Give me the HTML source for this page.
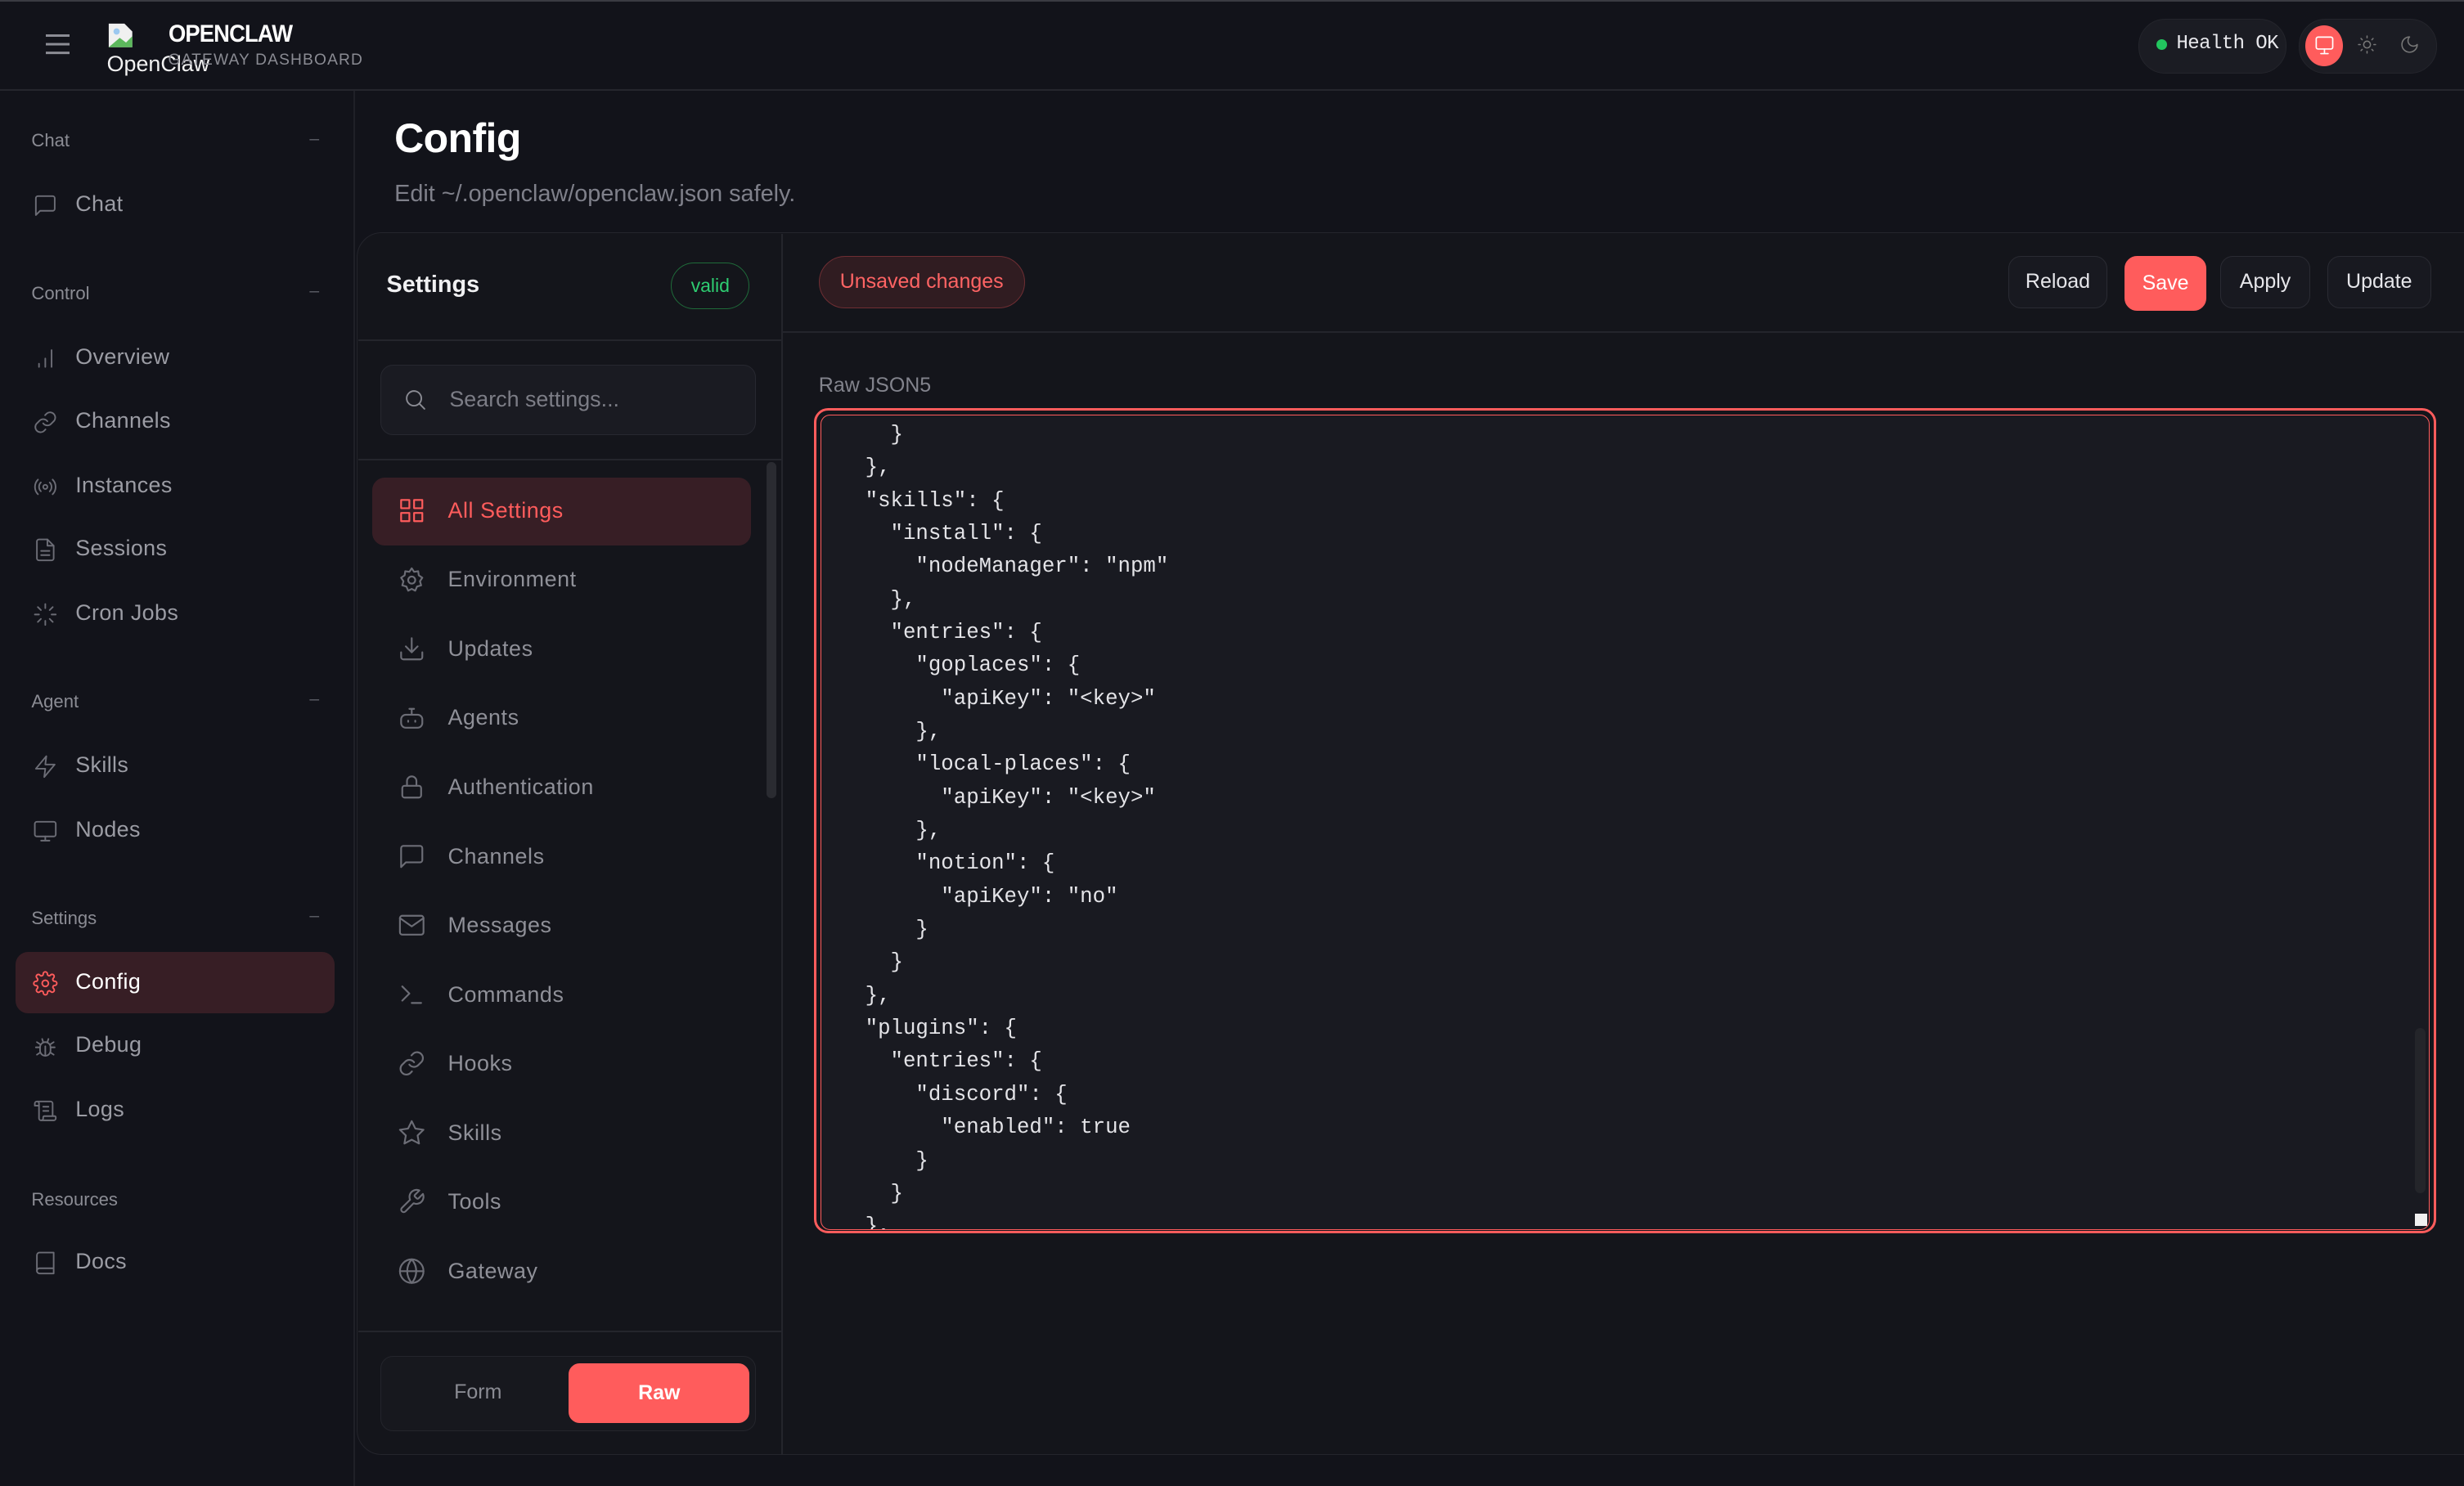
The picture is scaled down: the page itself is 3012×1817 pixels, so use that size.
<!DOCTYPE html>
<html><head><meta charset="utf-8">
<style>
html{zoom:1.92092}
body{margin:0;width:1568px;height:945.4px;background:#12131a;font-family:"Liberation Sans",sans-serif;color:#e6e6ea;overflow:hidden;position:relative}
.a{position:absolute}
.ic{position:absolute;fill:none;stroke:currentColor;stroke-width:1.5;stroke-linecap:round;stroke-linejoin:round}
.sl{position:absolute;left:20px;font-size:11.5px;color:#8b8c94}
.sd{position:absolute;left:197px;font-size:11px;color:#5c5d66}
.si{position:absolute;left:0;width:226px;height:20px;color:#9b9ca4;font-size:14px}
.si span{position:absolute;left:48px;top:1px;letter-spacing:.2px}
.si svg{left:21px;top:2px;width:16px;height:16px;color:#6c6d76}
.ni{position:absolute;left:237px;width:241px;height:44px;color:#8f9098;font-size:14px}
.ni span{position:absolute;left:48px;top:13px;letter-spacing:.3px}
.ni svg{left:16px;top:12px;width:18px;height:18px;color:#6c6d76}
.btn{position:absolute;top:163px;height:32px;border:1px solid #2a2b33;border-radius:8px;background:#181920;font-size:13px;color:#e6e6ea;text-align:center;line-height:32px}
pre{margin:0;font-family:"Liberation Mono","DejaVu Sans Mono",monospace;font-size:13.4px;line-height:21px;color:#e4e4e8}
</style></head><body>
<div class="a" style="left:0;top:0;width:1568px;height:1px;background:#3a3b42"></div>
<!-- top bar -->
<div class="a" style="left:0;top:57px;width:1568px;height:1px;background:#25262d"></div>
<div class="a" style="left:29px;top:22px;width:15px;height:1.5px;background:#8c8d95;box-shadow:0 5.5px 0 #8c8d95,0 11px 0 #8c8d95"></div>
<svg class="a" style="left:68px;top:14px" width="17" height="17" viewBox="0 0 17 17"><path d="M1 1h10l5 5v10H1z" fill="#f0f0f0"/><path d="M1 16l7-6 4 3 4-4v7z" fill="#5cb85c"/><circle cx="6" cy="6" r="2" fill="#9cc8f0"/></svg>
<div class="a" style="left:68px;top:33px;font-size:14px;color:#f2f2f2">OpenClaw</div>
<div class="a" style="left:107px;top:13px;font-size:15.5px;font-weight:bold;color:#fff;letter-spacing:-.5px;transform:scaleX(.92);transform-origin:left">OPENCLAW</div>
<div class="a" style="left:107px;top:33px;font-size:10px;color:#8a8b93;letter-spacing:.6px">GATEWAY DASHBOARD</div>
<div class="a" style="left:1361px;top:12px;width:93px;height:34px;border-radius:17px;background:#1b1c23;border:1px solid #24252c"></div>
<div class="a" style="left:1372px;top:25px;width:7px;height:7px;border-radius:50%;background:#22c55e"></div>
<div class="a" style="left:1385px;top:21px;font-size:12.5px;color:#e8e8ec;font-family:'Liberation Mono',monospace;letter-spacing:-.3px">Health OK</div>
<div class="a" style="left:1463px;top:12px;width:87px;height:34px;border-radius:17px;background:#1b1c23;border:1px solid #24252c"></div>
<div class="a" style="left:1467px;top:16px;width:24px;height:26px;border-radius:50%;background:#ff5c5c"></div>
<svg class="ic" style="left:1472px;top:22px;color:#fff" width="14" height="14" viewBox="0 0 24 24"><rect x="3" y="3" width="18" height="13" rx="2"/><path d="M12 16v4M8 21h8"/></svg>
<svg class="ic" style="left:1500px;top:22px;color:#777" width="13" height="13" viewBox="0 0 24 24"><circle cx="12" cy="12" r="4"/><path d="M12 2v2M12 20v2M4.9 4.9l1.4 1.4M17.7 17.7l1.4 1.4M2 12h2M20 12h2M4.9 19.1l1.4-1.4M17.7 6.3l1.4-1.4"/></svg>
<svg class="ic" style="left:1527px;top:22px;color:#777" width="13" height="13" viewBox="0 0 24 24"><path d="M12 3a6 6 0 0 0 9 9 9 9 0 1 1-9-9z"/></svg>

<!-- sidebar -->
<div class="a" style="left:225px;top:58px;width:1px;height:888px;background:#1f2027"></div>
<div class="sl" style="top:83px">Chat</div><div class="sd" style="top:82px">–</div>
<div class="si" style="top:121px"><svg class="ic" viewBox="0 0 24 24"><path d="M21 15a2 2 0 0 1-2 2H7l-4 4V5a2 2 0 0 1 2-2h14a2 2 0 0 1 2 2z"/></svg><span>Chat</span></div>
<div class="sl" style="top:180px">Control</div><div class="sd" style="top:179px">–</div>
<div class="si" style="top:218px"><svg class="ic" viewBox="0 0 24 24"><path d="M6 20v-3M12 20v-8M18 20V4"/></svg><span>Overview</span></div>
<div class="si" style="top:259px"><svg class="ic" viewBox="0 0 24 24"><path d="M10 13a5 5 0 0 0 7.5.5l3-3a5 5 0 0 0-7-7l-1.7 1.7"/><path d="M14 11a5 5 0 0 0-7.5-.5l-3 3a5 5 0 0 0 7 7l1.7-1.7"/></svg><span>Channels</span></div>
<div class="si" style="top:300px"><svg class="ic" viewBox="0 0 24 24"><circle cx="12" cy="12" r="2"/><path d="M16.2 7.8a6 6 0 0 1 0 8.5M7.8 16.2a6 6 0 0 1 0-8.5M19 5a10 10 0 0 1 0 14M5 19A10 10 0 0 1 5 5"/></svg><span>Instances</span></div>
<div class="si" style="top:340px"><svg class="ic" viewBox="0 0 24 24"><path d="M14 2H6a2 2 0 0 0-2 2v16a2 2 0 0 0 2 2h12a2 2 0 0 0 2-2V8z"/><path d="M14 2v6h6M8 13h8M8 17h8"/></svg><span>Sessions</span></div>
<div class="si" style="top:381px"><svg class="ic" viewBox="0 0 24 24"><path d="M12 2v4M12 18v4M4.9 4.9l2.9 2.9M16.2 16.2l2.9 2.9M2 12h4M18 12h4M4.9 19.1l2.9-2.9M16.2 7.8l2.9-2.9"/></svg><span>Cron Jobs</span></div>
<div class="sl" style="top:440px">Agent</div><div class="sd" style="top:439px">–</div>
<div class="si" style="top:478px"><svg class="ic" viewBox="0 0 24 24"><path d="M13 2L3 14h9l-1 8 10-12h-9z"/></svg><span>Skills</span></div>
<div class="si" style="top:519px"><svg class="ic" viewBox="0 0 24 24"><rect x="2" y="3" width="20" height="14" rx="2"/><path d="M8 21h8M12 17v4"/></svg><span>Nodes</span></div>
<div class="sl" style="top:578px">Settings</div><div class="sd" style="top:577px">–</div>
<div class="a" style="left:10px;top:606px;width:203px;height:39px;border-radius:8px;background:#371e25"></div>
<div class="si" style="top:616px;color:#fff"><svg class="ic" viewBox="0 0 24 24" style="color:#ff5c5c"><circle cx="12" cy="12" r="3"/><path d="M19.4 15a1.7 1.7 0 0 0 .3 1.8l.1.1a2 2 0 1 1-2.8 2.8l-.1-.1a1.7 1.7 0 0 0-1.8-.3 1.7 1.7 0 0 0-1 1.5V21a2 2 0 1 1-4 0v-.1a1.7 1.7 0 0 0-1.1-1.5 1.7 1.7 0 0 0-1.8.3l-.1.1a2 2 0 1 1-2.8-2.8l.1-.1a1.7 1.7 0 0 0 .3-1.8 1.7 1.7 0 0 0-1.5-1H3a2 2 0 1 1 0-4h.1a1.7 1.7 0 0 0 1.5-1.1 1.7 1.7 0 0 0-.3-1.8l-.1-.1a2 2 0 1 1 2.8-2.8l.1.1a1.7 1.7 0 0 0 1.8.3H9a1.7 1.7 0 0 0 1-1.5V3a2 2 0 1 1 4 0v.1a1.7 1.7 0 0 0 1 1.5 1.7 1.7 0 0 0 1.8-.3l.1-.1a2 2 0 1 1 2.8 2.8l-.1.1a1.7 1.7 0 0 0-.3 1.8V9a1.7 1.7 0 0 0 1.5 1H21a2 2 0 1 1 0 4h-.1a1.7 1.7 0 0 0-1.5 1z"/></svg><span>Config</span></div>
<div class="si" style="top:656px"><svg class="ic" viewBox="0 0 24 24"><rect x="7" y="8" width="10" height="13" rx="5"/><path d="M12 12v9M3 13h4M17 13h4M4 8l3 2M20 8l-3 2M4 20l3-2M20 20l-3-2M9 5l1 3M15 5l-1 3"/></svg><span>Debug</span></div>
<div class="si" style="top:697px"><svg class="ic" viewBox="0 0 24 24"><path d="M15 12h-5M15 8h-5M19 17V5a2 2 0 0 0-2-2H4M8 21h12a2 2 0 0 0 2-2v-1a1 1 0 0 0-1-1H11a1 1 0 0 0-1 1v1a2 2 0 1 1-4 0V5a2 2 0 1 0-4 0v2h4"/></svg><span>Logs</span></div>
<div class="sl" style="top:757px">Resources</div>
<div class="si" style="top:794px"><svg class="ic" viewBox="0 0 24 24"><path d="M4 19.5A2.5 2.5 0 0 1 6.5 17H20V2H6.5A2.5 2.5 0 0 0 4 4.5z"/><path d="M4 19.5A2.5 2.5 0 0 0 6.5 22H20v-5"/></svg><span>Docs</span></div>

<!-- header -->
<div class="a" style="left:251px;top:73px;font-size:26px;font-weight:bold;color:#fff;letter-spacing:-.3px">Config</div>
<div class="a" style="left:251px;top:115px;font-size:15px;color:#7f808a">Edit ~/.openclaw/openclaw.json safely.</div>

<!-- panel -->
<div class="a" style="left:227px;top:148px;width:1360px;height:777px;border:1px solid #24252c;border-radius:16px;background:#14151b"></div>
<div class="a" style="left:497px;top:149px;width:1px;height:777px;background:#24252c"></div>
<div class="a" style="left:228px;top:216px;width:269px;height:1px;background:#24252c"></div>
<div class="a" style="left:246px;top:173px;font-size:15px;font-weight:bold;color:#f0f0f2">Settings</div>
<div class="a" style="left:427px;top:167px;width:49px;height:29px;border:1px solid #1f6b3a;border-radius:15px;text-align:center;line-height:29px;font-size:12px;color:#2ecc71">valid</div>
<div class="a" style="left:242px;top:232px;width:238px;height:44px;border:1px solid #272830;border-radius:8px;background:#1a1b22"></div>
<svg class="ic" style="left:256px;top:246px;color:#8a8b93" width="16" height="16" viewBox="0 0 24 24"><circle cx="11" cy="11" r="7"/><path d="M21 21l-5-5"/></svg>
<div class="a" style="left:286px;top:246px;font-size:14px;color:#7c7d86">Search settings...</div>
<div class="a" style="left:228px;top:292px;width:269px;height:1px;background:#24252c"></div>
<div class="a" style="left:488px;top:294px;width:6px;height:214px;border-radius:3px;background:#2a2b31"></div>
<div class="a" style="left:237px;top:304px;width:241px;height:43px;border-radius:8px;background:#371e25"></div>
<div class="ni" style="top:304px;color:#ff5c5c"><svg class="ic" viewBox="0 0 24 24" style="color:#ff5c5c"><rect x="3" y="3" width="7" height="7"/><rect x="14" y="3" width="7" height="7"/><rect x="3" y="14" width="7" height="7"/><rect x="14" y="14" width="7" height="7"/></svg><span>All Settings</span></div>
<div class="ni" style="top:348px"><svg class="ic" viewBox="0 0 24 24"><circle cx="12" cy="12" r="3"/><path d="M12 2l2 3 3.5-.5.5 3.5 3 2-2 3 1 3.5-3.5 1L15 21l-3-1.5L9 21l-1.5-3.5L4 16.5l1-3.5-2-3 3-2 .5-3.5L10 5z"/></svg><span>Environment</span></div>
<div class="ni" style="top:392px"><svg class="ic" viewBox="0 0 24 24"><path d="M21 15v4a2 2 0 0 1-2 2H5a2 2 0 0 1-2-2v-4M7 10l5 5 5-5M12 15V3"/></svg><span>Updates</span></div>
<div class="ni" style="top:436px"><svg class="ic" viewBox="0 0 24 24"><rect x="3" y="9" width="18" height="11" rx="4"/><path d="M12 9V5M10 4h4M9 14v1M15 14v1"/></svg><span>Agents</span></div>
<div class="ni" style="top:480px"><svg class="ic" viewBox="0 0 24 24"><rect x="4" y="11" width="16" height="10" rx="2"/><path d="M8 11V7a4 4 0 0 1 8 0v4"/></svg><span>Authentication</span></div>
<div class="ni" style="top:524px"><svg class="ic" viewBox="0 0 24 24"><path d="M21 15a2 2 0 0 1-2 2H7l-4 4V5a2 2 0 0 1 2-2h14a2 2 0 0 1 2 2z"/></svg><span>Channels</span></div>
<div class="ni" style="top:568px"><svg class="ic" viewBox="0 0 24 24"><rect x="2" y="4" width="20" height="16" rx="2"/><path d="M2 6l10 7 10-7"/></svg><span>Messages</span></div>
<div class="ni" style="top:612px"><svg class="ic" viewBox="0 0 24 24"><path d="M4 17l6-6-6-6M12 19h8"/></svg><span>Commands</span></div>
<div class="ni" style="top:656px"><svg class="ic" viewBox="0 0 24 24"><path d="M10 13a5 5 0 0 0 7.5.5l3-3a5 5 0 0 0-7-7l-1.7 1.7"/><path d="M14 11a5 5 0 0 0-7.5-.5l-3 3a5 5 0 0 0 7 7l1.7-1.7"/></svg><span>Hooks</span></div>
<div class="ni" style="top:700px"><svg class="ic" viewBox="0 0 24 24"><path d="M12 2l3.1 6.3 6.9 1-5 4.9 1.2 6.8L12 17.8 5.8 21l1.2-6.8-5-4.9 6.9-1z"/></svg><span>Skills</span></div>
<div class="ni" style="top:744px"><svg class="ic" viewBox="0 0 24 24"><path d="M14.7 6.3a1 1 0 0 0 0 1.4l1.6 1.6a1 1 0 0 0 1.4 0l3.8-3.8a6 6 0 0 1-7.9 7.9l-6.9 6.9a2.1 2.1 0 0 1-3-3l6.9-6.9a6 6 0 0 1 7.9-7.9z"/></svg><span>Tools</span></div>
<div class="ni" style="top:788px"><svg class="ic" viewBox="0 0 24 24"><circle cx="12" cy="12" r="10"/><path d="M2 12h20M12 2a15 15 0 0 1 0 20M12 2a15 15 0 0 0 0 20"/></svg><span>Gateway</span></div>
<div class="a" style="left:228px;top:847px;width:269px;height:1px;background:#24252c"></div>
<div class="a" style="left:242px;top:863px;width:238px;height:47px;border:1px solid #24252c;border-radius:8px;background:#17181e"></div>
<div class="a" style="left:289px;top:879px;font-size:13px;color:#8a8b93">Form</div>
<div class="a" style="left:362px;top:868px;width:115px;height:38px;border-radius:7px;background:#ff5c5c;text-align:center;line-height:38px;font-size:13px;font-weight:bold;color:#fff">Raw</div>

<!-- right header -->
<div class="a" style="left:498px;top:211px;width:1070px;height:1px;background:#24252c"></div>
<div class="a" style="left:521px;top:163px;width:130px;height:32px;border:1px solid #6e2e33;border-radius:17px;background:#301c21;text-align:center;line-height:32px;font-size:13px;color:#ff6464">Unsaved changes</div>
<div class="btn" style="left:1278px;width:62px">Reload</div>
<div class="btn" style="left:1352px;width:51px;background:#ff5c5c;border-color:#ff5c5c;color:#fff;height:34px;top:163px;line-height:34px">Save</div>
<div class="btn" style="left:1413px;width:56px">Apply</div>
<div class="btn" style="left:1481px;width:65px">Update</div>

<div class="a" style="left:521px;top:238px;font-size:13px;color:#82838c">Raw JSON5</div>
<div class="a" style="left:518px;top:260px;width:1029px;height:522px;border:2px solid #ff5c5c;border-radius:9px"></div>
<div class="a" style="left:522px;top:264px;width:1023px;height:518px;border:1px solid #ff5c5c;border-radius:6px;border-bottom-width:1px;background:#191a21;overflow:hidden">
<pre style="position:absolute;left:12px;top:2px">    }
  },
  "skills": {
    "install": {
      "nodeManager": "npm"
    },
    "entries": {
      "goplaces": {
        "apiKey": "&lt;key&gt;"
      },
      "local-places": {
        "apiKey": "&lt;key&gt;"
      },
      "notion": {
        "apiKey": "no"
      }
    }
  },
  "plugins": {
    "entries": {
      "discord": {
        "enabled": true
      }
    }
  },</pre>
<div class="a" style="left:1014px;top:390px;width:7px;height:105px;border-radius:4px;background:#24252a"></div>
<div class="a" style="left:1014px;top:508px;width:8px;height:8px;background:#f0f0f0"></div>
</div>
</body></html>
